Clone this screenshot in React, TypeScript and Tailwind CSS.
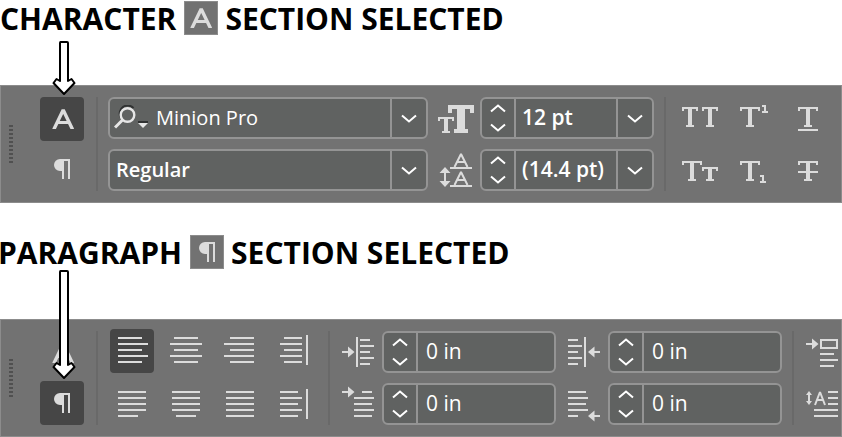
import type { ReactNode } from 'react';
import clsx from 'clsx';

type Section = 'character' | 'paragraph';

interface IconProps {
	children: ReactNode;
	width: number;
	height: number;
}

const Icon = ({ children, width, height }: IconProps) => (
	<svg
		width={width}
		height={height}
		viewBox={`0 0 ${width} ${height}`}
		fill="currentColor"
		aria-hidden="true"
		className="block shrink-0 text-[#dcdcdc]"
	>
		{children}
	</svg>
);

interface SlabProps {
	x: number;
	y: number;
	w: number;
	h: number;
	stem?: number;
	foot?: number;
	bar?: number;
}

// slab serif T, built from bars
const SlabT = ({ x, y, w, h, stem = 4, foot = 8, bar = 2 }: SlabProps) => (
	<g>
		<rect x={x} y={y} width={w} height={bar} />
		<rect x={x} y={y} width={bar} height={bar * 2} />
		<rect x={x + w - bar} y={y} width={bar} height={bar * 2} />
		<rect x={x + (w - stem) / 2} y={y} width={stem} height={h} />
		<rect x={x + (w - foot) / 2} y={y + h - bar} width={foot} height={bar} />
	</g>
);

const SmallOne = ({ x, y }: { x: number; y: number }) => (
	<g>
		<rect x={x} y={y} width={4} height={2} />
		<rect x={x + 2} y={y} width={2} height={8} />
		<rect x={x} y={y + 6} width={6} height={2} />
	</g>
);

const LetterA = () => (
	<Icon width={22} height={20}>
		<g fill="none" stroke="currentColor" strokeWidth="3.4">
			<polyline points="1.8,20.5 11.2,1 20.600,20.5" strokeLinejoin="bevel" />
			<line x1="5" y1="13.5" x2="17" y2="13.5" strokeWidth="3" />
		</g>
	</Icon>
);

const Pilcrow = () => (
	<Icon width={18} height={20}>
		<path d="M17 0H7a6 6 0 0 0 0 12h2V20h2V2h4v18h2z" />
	</Icon>
);

const Chevron = ({ up = false }: { up?: boolean }) => (
	<svg width="16" height="9" viewBox="0 0 16 9" aria-hidden="true" className="block">
		<path
			d={up ? 'M1 7.5 8 1.5l7 6' : 'M1 1.5 8 7.5l7-6'}
			fill="none"
			stroke="#fff"
			strokeWidth="2"
		/>
	</svg>
);

const ArrowRight = ({ x, y }: { x: number; y: number }) => (
	<path d={`M${x} ${y - 1}h6v-4.500l6.500 5.500l-6.500 5.500v-4.500h-6z`} />
);

const ArrowLeft = ({ x, y }: { x: number; y: number }) => (
	<path d={`M${x} ${y}l6.500-5.500v4.500h6v2h-6v4.500z`} />
);

// text lines as [x, width], six pixels apart
const Lines = ({ rows, top = 8 }: { rows: number[][]; top?: number }) => (
	<g>
		{rows.map(([x, w], i) => (
			<rect key={i} x={x} y={top + i * 6} width={w} height={2} />
		))}
	</g>
);

const alignments = [
	{ name: 'Align left', rows: [[8, 24], [8, 30], [8, 24], [8, 30], [8, 24]] },
	{ name: 'Align center', rows: [[10, 24], [6, 32], [10, 24], [6, 32], [10, 24]] },
	{ name: 'Align right', rows: [[12, 24], [6, 30], [12, 24], [6, 30], [12, 24]] },
	{ name: 'Align towards spine', spine: true, rows: [[12, 18], [8, 22], [12, 18], [8, 22], [12, 18]] },
	{ name: 'Justify left', rows: [[8, 28], [8, 28], [8, 28], [8, 28], [8, 20]] },
	{ name: 'Justify center', rows: [[8, 28], [8, 28], [8, 28], [8, 28], [12, 20]] },
	{ name: 'Justify all', rows: [[8, 28], [8, 28], [8, 28], [8, 28], [8, 28]] },
	{ name: 'Align away from spine', spine: true, rows: [[8, 18], [8, 22], [8, 18], [8, 22], [8, 18]] },
];

const caseButtons = [
	{ name: 'All caps', icon: <><SlabT x={0} y={5} w={16} h={20} /><SlabT x={20} y={5} w={16} h={20} /></> },
	{ name: 'Superscript', icon: <><SlabT x={0} y={5} w={20} h={20} /><SmallOne x={22} y={3} /></> },
	{ name: 'Underline', icon: <><SlabT x={0} y={5} w={20} h={20} /><rect x="0" y="27" width="20" height="2" /></> },
	{ name: 'Small caps', icon: <><SlabT x={0} y={5} w={20} h={20} /><SlabT x={20} y={11} w={16} h={14} /></> },
	{ name: 'Subscript', icon: <><SlabT x={0} y={5} w={20} h={20} /><SmallOne x={20} y={19} /></> },
	{ name: 'Strikethrough', icon: <><SlabT x={0} y={5} w={20} h={20} /><rect x="0" y="15" width="20" height="2" /></> },
];

const FontSizeIcon = () => (
	<Icon width={40} height={42}>
		<SlabT x={4} y={20} w={16} h={16} />
		<SlabT x={14} y={8} w={26} h={28} stem={8} foot={14} bar={4} />
	</Icon>
);

const LeadingIcon = () => (
	<Icon width={40} height={42}>
		<g fill="none" stroke="currentColor" strokeWidth="2">
			<polyline points="20.5,18 27,5 33.5,18" strokeLinejoin="bevel" />
			<line x1="23" y1="13" x2="31" y2="13" />
			<polyline points="20.5,36 27,23 33.5,36" strokeLinejoin="bevel" />
			<line x1="23" y1="31" x2="31" y2="31" />
		</g>
		<rect x="16" y="18" width="22" height="2" />
		<rect x="16" y="36" width="22" height="2" />
		<path d="M11 18l5.500 6h-4.500v8h4.500l-5.500 6l-5.500-6h4.500v-8h-4.500z" />
	</Icon>
);

const LeftIndentIcon = () => (
	<Icon width={32} height={42}>
		<ArrowRight x={0} y={21} />
		<rect x="14" y="6" width="2" height="30" />
		<Lines rows={[[18, 10], [18, 14], [18, 10], [18, 14], [18, 10]]} />
	</Icon>
);

const FirstLineIcon = () => (
	<Icon width={32} height={42}>
		<ArrowRight x={0} y={9} />
		<Lines rows={[[20, 10], [12, 20], [12, 18], [12, 20], [12, 18]]} />
	</Icon>
);

const RightIndentIcon = () => (
	<Icon width={32} height={42}>
		<Lines rows={[[0, 10], [0, 14], [0, 10], [0, 14], [0, 10]]} />
		<rect x="16" y="6" width="2" height="30" />
		<ArrowLeft x={20} y={21} />
	</Icon>
);

const LastLineIcon = () => (
	<Icon width={32} height={42}>
		<Lines rows={[[0, 18], [0, 20], [0, 18], [0, 20], [0, 10]]} />
		<ArrowLeft x={20} y={33} />
	</Icon>
);

const SpaceBeforeIcon = () => (
	<Icon width={32} height={42}>
		<ArrowRight x={0} y={13} />
		<rect x="15" y="9" width="16" height="8" fill="none" stroke="currentColor" strokeWidth="2" />
		<Lines top={22} rows={[[14, 14], [14, 18], [14, 14]]} />
	</Icon>
);

const DropCapIcon = () => (
	<Icon width={32} height={42}>
		<path d="M3 8l3 4h-2v6h2l-3 4l-3-4h2v-6h-2z" />
		<g fill="none" stroke="currentColor" strokeWidth="2">
			<polyline points="9,22 14,9 19,22" strokeLinejoin="bevel" />
			<line x1="11" y1="17" x2="17" y2="17" />
		</g>
		<Lines rows={[[22, 10], [22, 10], [22, 10], [8, 24], [8, 24]]} />
	</Icon>
);

const fieldStyle =
	'flex h-[42px] min-w-0 rounded-md border-2 border-[#949494] bg-[#606261] text-white';

const Stepper = ({ label }: { label: string }) => (
	<div className="flex w-[34px] shrink-0 flex-col border-r-2 border-[#949494]">
		<button type="button" aria-label={`Increase ${label}`} className="flex flex-1 items-center justify-center">
			<Chevron up />
		</button>
		<button type="button" aria-label={`Decrease ${label}`} className="flex flex-1 items-center justify-center">
			<Chevron />
		</button>
	</div>
);

const DropButton = ({ label }: { label: string }) => (
	<button
		type="button"
		aria-label={label}
		className="flex w-9 shrink-0 items-center justify-center border-l-2 border-[#949494]"
	>
		<Chevron />
	</button>
);

interface NumberFieldProps {
	id: string;
	label: string;
	value: string;
	icon: ReactNode;
	presets?: boolean;
}

const NumberField = ({ id, label, value, icon, presets = false }: NumberFieldProps) => (
	<div className={clsx('flex items-center', presets ? 'gap-1.5' : 'flex-1 gap-2')}>
		<label htmlFor={id} aria-label={label}>
			{icon}
		</label>
		<div className={clsx(fieldStyle, 'text-[21px]', presets ? 'w-[174px]' : 'flex-1')}>
			<Stepper label={label} />
			<input
				id={id}
				type="text"
				defaultValue={value}
				className={clsx('w-0 min-w-0 flex-1 outline-none', presets ? 'pl-1.5 font-semibold' : 'pl-2')}
			/>
			{presets && <DropButton label={`${label} presets`} />}
		</div>
	</div>
);

const Divider = () => <div className="h-[94px] w-0.5 shrink-0 bg-[#696969]" />;

const Tabs = ({ active }: { active: Section }) => (
	<div className="mr-3 ml-[27px] flex shrink-0 flex-col gap-1.5">
		<button
			type="button"
			aria-label="Character"
			className={clsx('flex size-11 items-center justify-center rounded pl-0.5', active === 'character' && 'bg-[#464646]')}
		>
			<LetterA />
		</button>
		<button
			type="button"
			aria-label="Paragraph"
			className={clsx('flex size-11 items-center justify-center rounded', active === 'paragraph' && 'bg-[#464646]')}
		>
			<Pilcrow />
		</button>
	</div>
);

const Panel = ({ active, children }: { active: Section; children: ReactNode }) => (
	<div className="mt-[50px] flex h-[118px] items-center border border-[#8c8c8c] bg-[#727272] pl-2">
		<div className="flex shrink-0 flex-col gap-0.5">
			{Array.from({ length: 10 }, (_, i) => (
				<span key={i} className="h-0.5 w-1 bg-[#505050]" />
			))}
		</div>
		<Tabs active={active} />
		<Divider />
		{children}
	</div>
);

const Heading = ({ word, icon }: { word: string; icon: ReactNode }) => (
	<h2 className="flex h-[34px] items-start text-[30px] leading-9 font-bold whitespace-nowrap text-black">
		{word}
		<span className="mr-[7px] ml-2 flex size-[34px] items-center justify-center border border-[#8c8c8c] bg-[#727272]">
			{icon}
		</span>
		SECTION SELECTED
	</h2>
);

// callout arrow that lies over the tabs
const Pointer = ({ length }: { length: number }) => (
	<svg width="24" height={length} viewBox={`0 0 24 ${length}`} aria-hidden="true" className="block">
		<path
			d={`M8.500 1H15Q16 1 16 2V${length - 15}L19.500 ${length - 17}L22.500 ${length - 13}L12 ${length - 2}L1.500 ${length - 13}L4.500 ${length - 17}L8 ${length - 15}V2Q8 1 8.500 1Z`}
			fill="#fff"
			stroke="#000"
			strokeWidth="2"
			strokeLinejoin="round"
		/>
	</svg>
);

const CharacterPanel = () => (
	<Panel active="character">
		<div className="ml-2.5 flex min-w-0 flex-1 flex-col gap-2.5">
			<div className={clsx(fieldStyle, 'text-xl')}>
				<button type="button" aria-label="Search fonts" className="shrink-0 pl-1">
					<svg width="36" height="26" viewBox="0 0 36 26" fill="none" aria-hidden="true">
						<path d="M6.500 12a8 8 0 0 1 13-9" stroke="#303232" strokeWidth="2" />
						<circle cx="13.500" cy="10" r="6.800" stroke="#e6e6e6" strokeWidth="2.400" />
						<path d="M8.500 15 1 22.500" stroke="#e6e6e6" strokeWidth="3" />
						<path d="M24 17h10" stroke="#303232" strokeWidth="2" />
						<path d="M24 18h10l-5 5z" fill="#e6e6e6" />
					</svg>
				</button>
				<input
					type="text"
					aria-label="Font family"
					defaultValue="Minion Pro"
					className="w-0 min-w-0 flex-1 pl-1.5 outline-none"
				/>
				<DropButton label="Show fonts" />
			</div>
			<div className={clsx(fieldStyle, 'relative text-xl')}>
				<select aria-label="Font style" className="w-full appearance-none pl-1.5 font-semibold outline-none">
					<option>Regular</option>
				</select>
				<span className="pointer-events-none absolute inset-y-0 right-0 flex w-9 items-center justify-center border-l-2 border-[#949494]">
					<Chevron />
				</span>
			</div>
		</div>
		<div className="mr-2.5 ml-1.5 flex shrink-0 flex-col gap-2.5">
			<NumberField id="font-size" label="Font size" value="12 pt" icon={<FontSizeIcon />} presets />
			<NumberField id="leading" label="Leading" value="(14.4 pt)" icon={<LeadingIcon />} presets />
		</div>
		<Divider />
		<div className="mr-[7px] ml-4 grid shrink-0 grid-cols-3 gap-x-[22px] gap-y-2.5">
			{caseButtons.map(({ name, icon }) => (
				<button key={name} type="button" aria-label={name} className="flex h-11 items-center">
					<Icon width={36} height={30}>
						{icon}
					</Icon>
				</button>
			))}
		</div>
	</Panel>
);

const ParagraphPanel = () => (
	<Panel active="paragraph">
		<div className="mx-3 grid shrink-0 grid-cols-4 gap-2.5">
			{alignments.map(({ name, rows, spine }, i) => (
				<button key={name} type="button" aria-label={name} className={clsx('rounded', i === 0 && 'bg-[#464646]')}>
					<Icon width={44} height={44}>
						<Lines rows={rows} />
						{spine && <rect x="34" y="6" width="2" height="30" />}
					</Icon>
				</button>
			))}
		</div>
		<Divider />
		<div className="mr-2.5 ml-3 grid min-w-0 flex-1 grid-cols-2 gap-x-3 gap-y-2.5">
			<NumberField id="left-indent" label="Left indent" value="0 in" icon={<LeftIndentIcon />} />
			<NumberField id="right-indent" label="Right indent" value="0 in" icon={<RightIndentIcon />} />
			<NumberField id="first-line" label="First line indent" value="0 in" icon={<FirstLineIcon />} />
			<NumberField id="last-line" label="Last line indent" value="0 in" icon={<LastLineIcon />} />
		</div>
		<Divider />
		<div className="mr-[3px] ml-3 flex shrink-0 flex-col gap-2.5">
			<SpaceBeforeIcon />
			<DropCapIcon />
		</div>
	</Panel>
);

const App = () => {
	return (
		<main className="flex flex-col gap-8 bg-white pt-px font-['Open_Sans','Noto_Sans',sans-serif]">
			<section className="relative">
				<Heading word="CHARACTER" icon={<LetterA />} />
				<CharacterPanel />
				<div className="pointer-events-none absolute top-10 left-[52px]">
					<Pointer length={55} />
				</div>
			</section>
			<section className="relative">
				<div className="-ml-0.5">
					<Heading word="PARAGRAPH" icon={<Pilcrow />} />
				</div>
				<ParagraphPanel />
				<div className="pointer-events-none absolute top-[35px] left-[52px]">
					<Pointer length={110} />
				</div>
			</section>
		</main>
	);
};

export default App;
